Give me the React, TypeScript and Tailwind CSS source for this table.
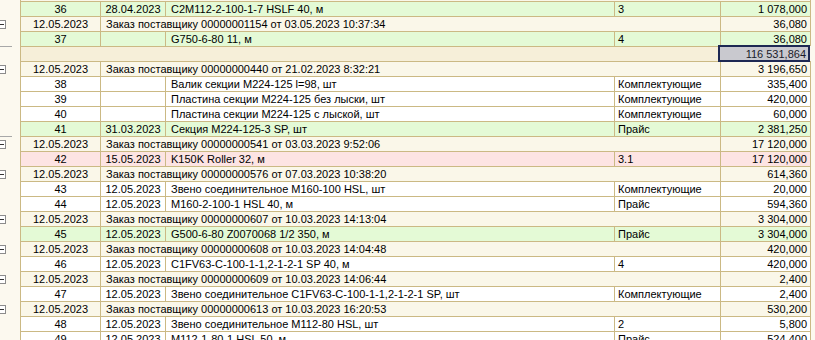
import React from "react";

type Row =
  | { kind: "item"; n: string; date: string; name: string; kind2: string; sum: string; tone: "green" | "white" | "pink" }
  | { kind: "order"; date: string; text: string; sum: string }
  | { kind: "total"; sum: string };

const rows: Row[] = [
  { kind: "item", n: "36", date: "28.04.2023", name: "C2M112-2-100-1-7 HSLF 40, м", kind2: "3", sum: "1 078,000", tone: "green" },
  { kind: "order", date: "12.05.2023", text: "Заказ поставщику 00000001154 от 03.05.2023 10:37:34", sum: "36,080" },
  { kind: "item", n: "37", date: "", name: "G750-6-80 11, м", kind2: "4", sum: "36,080", tone: "green" },
  { kind: "total", sum: "116 531,864" },
  { kind: "order", date: "12.05.2023", text: "Заказ поставщику 00000000440 от 21.02.2023 8:32:21", sum: "3 196,650" },
  { kind: "item", n: "38", date: "", name: "Валик секции М224-125 l=98, шт", kind2: "Комплектующие", sum: "335,400", tone: "white" },
  { kind: "item", n: "39", date: "", name: "Пластина секции М224-125 без лыски, шт", kind2: "Комплектующие", sum: "420,000", tone: "white" },
  { kind: "item", n: "40", date: "", name: "Пластина секции М224-125 с лыской, шт", kind2: "Комплектующие", sum: "60,000", tone: "white" },
  { kind: "item", n: "41", date: "31.03.2023", name: "Секция М224-125-3 SP, шт", kind2: "Прайс", sum: "2 381,250", tone: "green" },
  { kind: "order", date: "12.05.2023", text: "Заказ поставщику 00000000541 от 03.03.2023 9:52:06", sum: "17 120,000" },
  { kind: "item", n: "42", date: "15.05.2023", name: "K150K Roller 32, м", kind2: "3.1", sum: "17 120,000", tone: "pink" },
  { kind: "order", date: "12.05.2023", text: "Заказ поставщику 00000000576 от 07.03.2023 10:38:20", sum: "614,360" },
  { kind: "item", n: "43", date: "12.05.2023", name: "Звено соединительное М160-100 HSL, шт", kind2: "Комплектующие", sum: "20,000", tone: "white" },
  { kind: "item", n: "44", date: "12.05.2023", name: "М160-2-100-1 HSL 40, м", kind2: "Прайс", sum: "594,360", tone: "white" },
  { kind: "order", date: "12.05.2023", text: "Заказ поставщику 00000000607 от 10.03.2023 14:13:04", sum: "3 304,000" },
  { kind: "item", n: "45", date: "12.05.2023", name: "G500-6-80 Z0070068 1/2 350, м", kind2: "Прайс", sum: "3 304,000", tone: "green" },
  { kind: "order", date: "12.05.2023", text: "Заказ поставщику 00000000608 от 10.03.2023 14:04:48", sum: "420,000" },
  { kind: "item", n: "46", date: "12.05.2023", name: "C1FV63-C-100-1-1,2-1-2-1 SP 40, м", kind2: "4", sum: "420,000", tone: "white" },
  { kind: "order", date: "12.05.2023", text: "Заказ поставщику 00000000609 от 10.03.2023 14:06:44", sum: "2,400" },
  { kind: "item", n: "47", date: "12.05.2023", name: "Звено соединительное C1FV63-C-100-1-1,2-1-2-1 SP, шт", kind2: "Комплектующие", sum: "2,400", tone: "white" },
  { kind: "order", date: "12.05.2023", text: "Заказ поставщику 00000000613 от 10.03.2023 16:20:53", sum: "530,200" },
  { kind: "item", n: "48", date: "12.05.2023", name: "Звено соединительное М112-80 HSL, шт", kind2: "2", sum: "5,800", tone: "white" },
  { kind: "item", n: "49", date: "12.05.2023", name: "М112-1-80-1 HSL 50, м", kind2: "Прайс", sum: "524,400", tone: "white" },
];

const toneBg = {
  green: "bg-[#e4fad6]",
  white: "bg-white",
  pink: "bg-[#fde4e3]",
};

const line = "border-[#cbb984]";

const Gutter = ({ box, mark }: { box?: boolean; mark?: boolean }) => (
  <div className="w-[20px] shrink-0 bg-[#fcf9ef] relative">
    {box && (
      <div className="absolute left-[-3px] top-[4px] w-[9px] h-[9px] border border-[#8c8c8c] bg-white flex items-center justify-center">
        <div className="w-[5px] h-px bg-[#333]" />
      </div>
    )}
    {mark && <div className="absolute left-0 top-0 w-[12px] h-px bg-[#a8a8a8]" />}
  </div>
);

const App = () => {
  return (
    <div className="w-[815px] h-[340px] overflow-hidden bg-[#fcf9ef] text-[11px] leading-[14px] text-black font-['Liberation_Sans',Arial,sans-serif]">
      {/* tail of previous row */}
      <div className="flex h-px">
        <Gutter />
        <div className={`w-[791px] bg-[#faf7e9] border-l border-r ${line}`} />
      </div>

      {rows.map((r, i) => {
        if (r.kind === "item") {
          const bg = toneBg[r.tone];
          return (
            <div key={i} className="flex h-[15px]">
              <Gutter mark={r.n === "41" ? false : false} />
              <div className={`flex ${bg} border-t ${line}`}>
                <div className={`w-[80px] border-l ${line} text-center`}>{r.n}</div>
                <div className={`w-[65px] border-l ${line} text-center`}>{r.date}</div>
                <div className={`w-[449px] border-l ${line} pl-[5px] whitespace-nowrap`}>{r.name}</div>
                <div className={`w-[106px] border-l ${line} pl-[3px] whitespace-nowrap`}>{r.kind2}</div>
                <div className={`w-[91px] border-l border-r ${line} text-right pr-[3px]`}>{r.sum}</div>
              </div>
            </div>
          );
        }
        if (r.kind === "order") {
          return (
            <div key={i} className="flex h-[15px]">
              <Gutter box mark={r.text.includes("00000000541")} />
              <div className={`flex bg-[#faf7e9] border-t ${line}`}>
                <div className={`w-[80px] border-l ${line} text-center`}>{r.date}</div>
                <div className={`w-[620px] border-l ${line} pl-[5px] whitespace-nowrap`}>{r.text}</div>
                <div className={`w-[91px] border-l border-r ${line} text-right pr-[3px]`}>{r.sum}</div>
              </div>
            </div>
          );
        }
        return (
          <div key={i} className="flex h-[15px]">
            <Gutter mark />
            <div className={`flex bg-[#f6efd9] border-t ${line}`}>
              <div className={`w-[699px] border-l ${line}`} />
              <div className="w-[92px] h-[17px] -mt-[2px] -ml-px relative z-10 border-2 border-[#1d2853] bg-[#c9c9cf] text-right pr-[2px] text-[#1a1a2a]">
                {r.sum}
              </div>
            </div>
          </div>
        );
      })}
    </div>
  );
};

export default App;
